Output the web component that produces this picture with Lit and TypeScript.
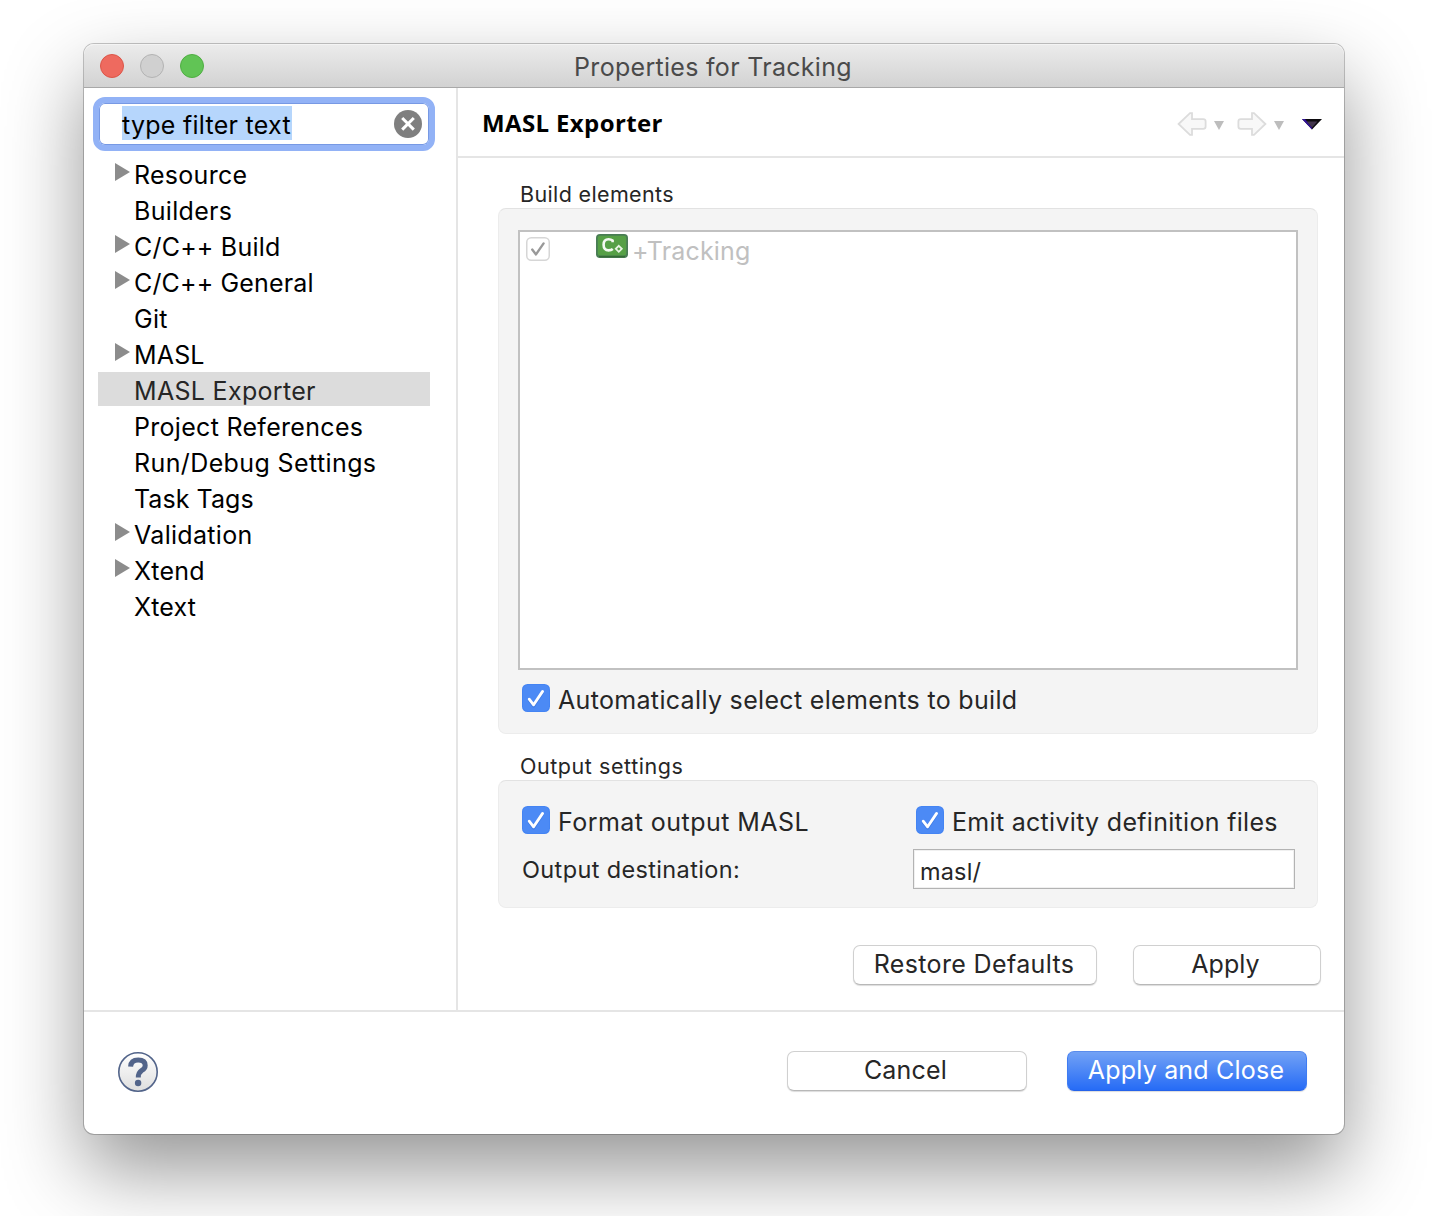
import { LitElement, html, svg, css } from "lit";
import { customElement, property } from "lit/decorators.js";
import { classMap } from "lit/directives/class-map.js";
import { styleMap } from "lit/directives/style-map.js";

interface TreeItem {
  label: string;
  tracking: number;
  expandable?: boolean;
  selected?: boolean;
}

const TREE: TreeItem[] = [
  { label: "Resource", tracking: 0.28, expandable: true },
  { label: "Builders", tracking: 0.32 },
  { label: "C/C++ Build", tracking: 0.2, expandable: true },
  { label: "C/C++ General", tracking: 0.15, expandable: true },
  { label: "Git", tracking: 0.3 },
  { label: "MASL", tracking: 0.15, expandable: true },
  { label: "MASL Exporter", tracking: 0.31, selected: true },
  { label: "Project References", tracking: 0.3 },
  { label: "Run/Debug Settings", tracking: 0.39 },
  { label: "Task Tags", tracking: 0.06 },
  { label: "Validation", tracking: 0.31, expandable: true },
  { label: "Xtend", tracking: 0.25, expandable: true },
  { label: "Xtext", tracking: 0.15 },
];

@customElement("check-box")
class CheckBox extends LitElement {
  @property({ type: Boolean }) disabled = false;

  static styles = css`
    :host { display: block; flex: none; }
    svg { display: block; }
  `;

  render() {
    return this.disabled
      ? html`<svg width="24" height="24" viewBox="0 0 24 24">
          <rect x="0.75" y="0.75" width="22.5" height="22.5" rx="4.5" fill="#fff" stroke="#d6d6d6" stroke-width="1.5" />
          <path d="M6.2 12.6 10 17.4 17.6 6.4" fill="none" stroke="#999" stroke-width="2.4" stroke-linecap="round" stroke-linejoin="round" />
        </svg>`
      : html`<svg width="28" height="28" viewBox="0 0 28 28">
          <rect width="28" height="28" rx="5.5" fill="#4484f3" />
          <rect x="1" y="1" width="26" height="26" rx="4.8" fill="#4c8af5" />
          <path d="M7.2 16.4 11.6 22.2 20.6 8.6" fill="none" stroke="#2f68cf" stroke-opacity=".45" stroke-width="2.8" stroke-linecap="round" stroke-linejoin="round" />
          <path d="M7.2 15.2 11.6 20.8 20.6 7.4" fill="none" stroke="#fff" stroke-width="2.8" stroke-linecap="round" stroke-linejoin="round" />
        </svg>`;
  }
}

@customElement("filter-tree")
class FilterTree extends LitElement {
  static styles = css`
    :host { display: block; padding: 9px 21px 0 9px; }
    .search {
      display: flex; align-items: center; justify-content: space-between;
      box-sizing: border-box; width: 342px; height: 54px; padding: 0 7px 0 23px;
      border: 6px solid #92b2f6; border-radius: 12px; background: #fff;
      box-shadow: inset 0 0 0 1px #7799e4;
      font-size: 25px; letter-spacing: 0.27px;
    }
    .query { height: 34px; margin-bottom: 2px; padding-right: 1px; background: #b6d6fc; line-height: 38px; color: #000; }
    .clear { display: block; }
    .tree { margin: 5px 0 0 5px; width: 332px; display: flex; flex-direction: column; gap: 2px; }
    .row { display: flex; height: 34px; font-size: 25px; line-height: 38px; color: #000; }
    .row.selected { background: #dcdcdc; color: #262626; }
    .twisty { flex: none; width: 36px; padding: 7px 0 0 17px; box-sizing: border-box; }
    .twisty svg { display: block; }
  `;

  render() {
    return html`
      <div class="search">
        <span class="query">type filter text</span>
        <svg class="clear" width="28" height="28" viewBox="0 0 28 28">
          <circle cx="14" cy="14" r="14" fill="#7f7f7f" />
          <path d="M8.2 8 19.8 19.6M19.8 8 8.2 19.6" stroke="#fff" stroke-width="3" />
        </svg>
      </div>
      <div class="tree">
        ${TREE.map(
          (item) => html`<div class=${classMap({ row: true, selected: !!item.selected })}>
            <span class="twisty">${item.expandable
              ? html`<svg width="15" height="18" viewBox="0 0 15 18"><path d="M0 0 15 9 0 18Z" fill="#8c8c8c" /></svg>`
              : null}</span>
            <span style=${styleMap({ letterSpacing: `${item.tracking}px` })}>${item.label}</span>
          </div>`
        )}
      </div>
    `;
  }
}

const arrow = svg`<path d="M1.6 12 13 1.2H15V7.2H26.2Q28.6 7.2 28.6 9.2V14.8Q28.6 16.8 26.2 16.8H15V22.8H13Z" fill="#f8f8f8" stroke="#dcdcdc" stroke-width="1.8" />`;

@customElement("app-root")
class AppRoot extends LitElement {
  static styles = css`
    :host {
      display: block; box-sizing: border-box; width: 1440px; height: 1216px;
      padding: 44px 96px 82px 84px; overflow: hidden; background: #fff;
      font-family: Inter, "Liberation Sans", sans-serif; color: #262626;
    }
    svg { display: block; }
    .window {
      display: flex; flex-direction: column; width: 1260px; height: 1090px;
      border-radius: 10px; background: #fff;
      box-shadow: 0 0 0 1px rgba(0, 0, 0, 0.22), 0 36px 80px rgba(0, 0, 0, 0.42);
    }
    .titlebar {
      display: grid; grid-template-columns: 1fr auto 1fr; align-items: center;
      box-sizing: border-box; height: 44px; padding: 0 16px; border-radius: 10px 10px 0 0;
      background: linear-gradient(#ececec, #d2d2d2); border-bottom: 1px solid #a8a8a8;
      box-shadow: inset 0 1px 0 #f4f4f4;
    }
    .lights { display: flex; gap: 16px; }
    .light { box-sizing: border-box; width: 24px; height: 24px; border-radius: 50%; border: 1px solid; }
    .close { background: #ee6a5f; border-color: #dc5548; }
    .minimize { background: #d0d0d0; border-color: #b3b3b3; }
    .zoom { background: #61c455; border-color: #4fae42; }
    .title { padding: 3px 2px 0 0; font-size: 25px; line-height: 40px; letter-spacing: 0.3px; color: #4a4a4a; }
    .body { display: flex; height: 922px; }
    .side { width: 372px; flex: none; border-right: 2px solid #e5e5e5; }
    .main { flex: 1; min-width: 0; }
    .head {
      display: flex; align-items: center; justify-content: space-between; box-sizing: border-box;
      height: 70px; padding: 0 22px 0 24px; border-bottom: 2px solid #e5e5e5;
    }
    h1 {
      margin: 0; padding: 2px 0 0; font: 700 24px/34px "Open Sans", "Noto Sans", sans-serif;
      letter-spacing: 0.37px; color: #000;
    }
    .nav { display: flex; align-items: center; padding-top: 4px; }
    .nav .drop { margin: 2px 13px 0 7px; }
    .nav .menu { margin: 1px 0 0 5px; }
    .flip { transform: scaleX(-1); }
    .content { padding: 20px 0 0 40px; }
    .caption { padding-left: 22px; height: 30px; font-size: 21.5px; line-height: 33px; letter-spacing: 0.36px; }
    .caption.wide { margin-top: 16px; letter-spacing: 0.56px; }
    .group {
      box-sizing: border-box; width: 820px; border-radius: 8px; background: #f4f4f4;
      border: 1px solid #ececec; border-top-color: #e2e2e2;
    }
    .build { height: 526px; padding: 21px 19px 0; }
    .list { box-sizing: border-box; height: 440px; border: 2px solid #c1c1c1; background: #fff; padding: 5px 6px; }
    .element { display: flex; align-items: flex-start; font-size: 25px; letter-spacing: 0.15px; line-height: 24px; color: #c0c0c0; }
    .element svg { margin: -3px 4px 0 46px; }
    .element span { padding-top: 2px; }
    .option { display: flex; align-items: center; gap: 8px; height: 28px; font-size: 25px; letter-spacing: 0.33px; }
    .option span { padding-top: 4px; line-height: 30px; }
    .auto { margin: 14px 0 0 4px; }
    .output { height: 128px; padding: 25px 22px 0 23px; display: grid; grid-template-columns: 391px 382px; align-content: start; }
    .fmt { letter-spacing: 0.45px; }
    .emit { padding-left: 3px; letter-spacing: 0.3px; }
    .field-label { margin-top: 15px; font-size: 23.5px; letter-spacing: 0.36px; line-height: 42px; }
    .field {
      box-sizing: border-box; margin-top: 15px; height: 40px; padding: 3px 0 0 6px; border: 1px solid #b3b3b3;
      background: #fff; box-shadow: inset 0 0 0 1px #f0f0f0;
      font-size: 23.5px; letter-spacing: 0.15px; line-height: 38px;
    }
    .actions { display: flex; gap: 36px; justify-content: flex-end; width: 823px; margin-top: 37px; }
    button {
      box-sizing: border-box; height: 40px; padding: 0 0 2px; border: 1px solid #d0d0d0; border-bottom-color: #b8b8b8;
      border-radius: 7px; background: #fff; box-shadow: 0 1px 1px rgba(0, 0, 0, 0.14);
      font: 400 25px/36px Inter, "Liberation Sans", sans-serif; color: #262626;
    }
    .restore { width: 244px; letter-spacing: 0.36px; padding-right: 2px; }
    .apply { width: 188px; letter-spacing: 0.07px; padding-right: 3px; }
    .cancel { width: 240px; letter-spacing: 0.21px; padding-right: 3px; }
    .primary {
      width: 240px; letter-spacing: 0.2px; color: #fff; padding-right: 2px;
      background: linear-gradient(#74a3f5, #246af6) border-box; border-color: #5a8cec #3f7cf2 #2563ea;
    }
    .footer {
      flex: 1; display: flex; align-items: flex-start; justify-content: space-between;
      border-top: 2px solid #e5e5e5; padding: 39px 37px 0 34px;
    }
    .help { margin-top: 1px; }
    .buttons { display: flex; gap: 40px; }
  `;

  render() {
    return html`
      <div class="window">
        <div class="titlebar">
          <div class="lights">
            <span class="light close"></span><span class="light minimize"></span><span class="light zoom"></span>
          </div>
          <div class="title">Properties for Tracking</div>
          <div></div>
        </div>
        <div class="body">
          <div class="side"><filter-tree></filter-tree></div>
          <div class="main">
            <div class="head">
              <h1>MASL Exporter</h1>
              <div class="nav">
                <svg width="30" height="24" viewBox="0 0 30 24">${arrow}</svg>
                <svg class="drop" width="10" height="9" viewBox="0 0 10 9"><path d="M0 0H10L5 9Z" fill="#bdbdbd" /></svg>
                <svg class="flip" width="30" height="24" viewBox="0 0 30 24">${arrow}</svg>
                <svg class="drop" width="10" height="9" viewBox="0 0 10 9"><path d="M0 0H10L5 9Z" fill="#bdbdbd" /></svg>
                <svg class="menu" width="20" height="11" viewBox="0 0 20 11">
                  <path d="M0 0H20L10 10.6Z" fill="#0c0a0e" />
                  <path d="M0 0H3L10 8.6V10.6Z" fill="#32109a" />
                  <path d="M4.6 2.4H15.4L10 8.4Z" fill="#41344b" />
                </svg>
              </div>
            </div>
            <div class="content">
              <div class="caption">Build elements</div>
              <div class="group build">
                <div class="list">
                  <div class="element">
                    <check-box disabled></check-box>
                    <svg width="32" height="24" viewBox="0 0 32 24">
                      <rect width="32" height="24" rx="4" fill="#4a7d55" />
                      <rect x="1.8" y="1.8" width="28.4" height="19.8" rx="2" fill="#56a046" />
                      <path d="M3 22.6H29" stroke="#356b35" stroke-width="1.4" />
                      <path d="M16.6 8.2V6.6Q15 5.3 12.6 5.3 7.6 5.3 7.6 10.8 7.6 16.4 12.6 16.4 15.2 16.4 16.8 15" fill="none" stroke="#f4faf2" stroke-width="2.6" />
                      <path d="M22.8 11.8 25.8 14.8 22.8 17.8 19.8 14.8Z" fill="none" stroke="#e8f4e4" stroke-width="1.8" />
                    </svg>
                    <span>+Tracking</span>
                  </div>
                </div>
                <div class="option auto"><check-box></check-box><span>Automatically select elements to build</span></div>
              </div>
              <div class="caption wide">Output settings</div>
              <div class="group output">
                <div class="option fmt"><check-box></check-box><span>Format output MASL</span></div>
                <div class="option emit"><check-box></check-box><span>Emit activity definition files</span></div>
                <div class="field-label">Output destination:</div>
                <div class="field">masl/</div>
              </div>
              <div class="actions">
                <button class="restore">Restore Defaults</button>
                <button class="apply">Apply</button>
              </div>
            </div>
          </div>
        </div>
        <div class="footer">
          <svg class="help" width="40" height="40" viewBox="0 0 40 40">
            <defs>
              <linearGradient id="help-fill" x1="0" y1="0" x2="0" y2="1">
                <stop offset="0" stop-color="#fff" /><stop offset="1" stop-color="#dedede" />
              </linearGradient>
            </defs>
            <circle cx="20" cy="20" r="19.2" fill="url(#help-fill)" stroke="#52648a" stroke-width="1.6" />
            <path d="M12.6 14.6Q13 8 20.2 8 27.2 8 27.2 13.4 27.2 16.4 23.8 18.4 20.3 20.6 20.3 25.6" fill="none" stroke="#52648a" stroke-width="5" />
            <circle cx="20.1" cy="31" r="3.2" fill="#52648a" />
          </svg>
          <div class="buttons">
            <button class="cancel">Cancel</button>
            <button class="primary">Apply and Close</button>
          </div>
        </div>
      </div>
    `;
  }
}
